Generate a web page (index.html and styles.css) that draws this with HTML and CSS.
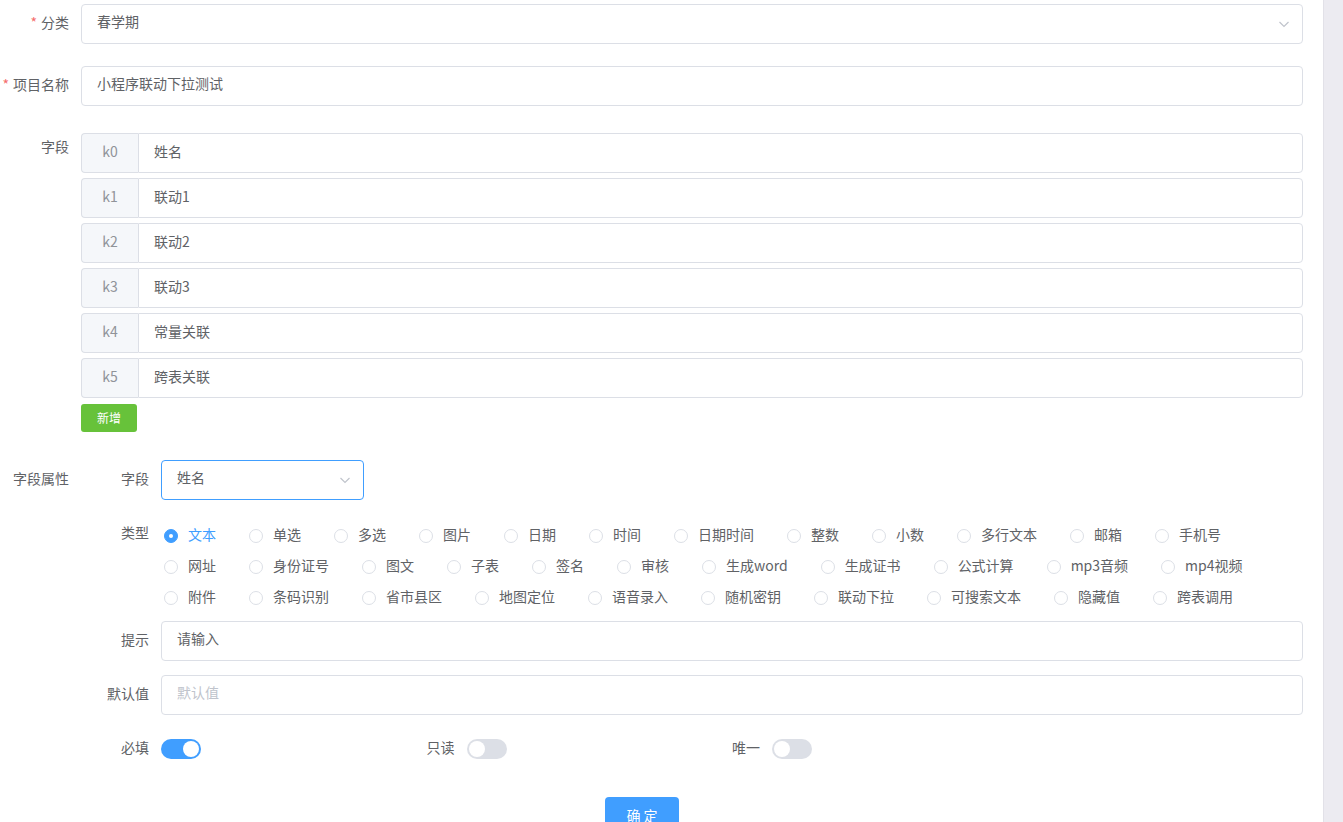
FILE: index.html
```html
<!DOCTYPE html>
<html lang="zh">
<head>
<meta charset="utf-8">
<title>表单</title>
<link rel="stylesheet" href="styles.css">
</head>
<body>
<div class="page">
  <div class="main">
    <div class="form-item">
      <label class="label"><span class="req">*</span>分类</label>
      <div class="content">
        <div class="input select"><span>春学期</span>
          <svg class="arrow" width="12" height="12" viewBox="0 0 12 12"><path d="M1.5 4 L6 8.5 L10.5 4" fill="none" stroke="#c0c4cc" stroke-width="1.2"/></svg>
        </div>
      </div>
    </div>
    <div class="form-item">
      <label class="label"><span class="req">*</span>项目名称</label>
      <div class="content">
        <div class="input"><span>小程序联动下拉测试</span></div>
      </div>
    </div>
    <div class="form-item fields">
      <label class="label">字段</label>
      <div class="content">
        <div class="group"><div class="prepend">k0</div><div class="ginput">姓名</div></div>
        <div class="group"><div class="prepend">k1</div><div class="ginput">联动1</div></div>
        <div class="group"><div class="prepend">k2</div><div class="ginput">联动2</div></div>
        <div class="group"><div class="prepend">k3</div><div class="ginput">联动3</div></div>
        <div class="group"><div class="prepend">k4</div><div class="ginput">常量关联</div></div>
        <div class="group"><div class="prepend">k5</div><div class="ginput">跨表关联</div></div>
        <button class="btn-add">新增</button>
      </div>
    </div>
    <div class="form-item attrs">
      <label class="label">字段属性</label>
      <div class="content">
        <div class="sub-item">
          <label class="sub-label">字段</label>
          <div class="sub-content">
            <div class="input select focus small"><span>姓名</span>
              <svg class="arrow" width="12" height="12" viewBox="0 0 12 12"><path d="M1.5 4 L6 8.5 L10.5 4" fill="none" stroke="#c0c4cc" stroke-width="1.2"/></svg>
            </div>
          </div>
        </div>
        <div class="sub-item types">
          <label class="sub-label">类型</label>
          <div class="sub-content radios">
            <span class="radio on"><i></i><b>文本</b></span>
            <span class="radio"><i></i><b>单选</b></span>
            <span class="radio"><i></i><b>多选</b></span>
            <span class="radio"><i></i><b>图片</b></span>
            <span class="radio"><i></i><b>日期</b></span>
            <span class="radio"><i></i><b>时间</b></span>
            <span class="radio"><i></i><b>日期时间</b></span>
            <span class="radio"><i></i><b>整数</b></span>
            <span class="radio"><i></i><b>小数</b></span>
            <span class="radio"><i></i><b>多行文本</b></span>
            <span class="radio"><i></i><b>邮箱</b></span>
            <span class="radio"><i></i><b>手机号</b></span>
            <span class="radio"><i></i><b>网址</b></span>
            <span class="radio"><i></i><b>身份证号</b></span>
            <span class="radio"><i></i><b>图文</b></span>
            <span class="radio"><i></i><b>子表</b></span>
            <span class="radio"><i></i><b>签名</b></span>
            <span class="radio"><i></i><b>审核</b></span>
            <span class="radio"><i></i><b>生成word</b></span>
            <span class="radio"><i></i><b>生成证书</b></span>
            <span class="radio"><i></i><b>公式计算</b></span>
            <span class="radio"><i></i><b>mp3音频</b></span>
            <span class="radio"><i></i><b>mp4视频</b></span>
            <span class="radio"><i></i><b>附件</b></span>
            <span class="radio"><i></i><b>条码识别</b></span>
            <span class="radio"><i></i><b>省市县区</b></span>
            <span class="radio"><i></i><b>地图定位</b></span>
            <span class="radio"><i></i><b>语音录入</b></span>
            <span class="radio"><i></i><b>随机密钥</b></span>
            <span class="radio"><i></i><b>联动下拉</b></span>
            <span class="radio"><i></i><b>可搜索文本</b></span>
            <span class="radio"><i></i><b>隐藏值</b></span>
            <span class="radio"><i></i><b>跨表调用</b></span>
          </div>
        </div>
        <div class="sub-item">
          <label class="sub-label">提示</label>
          <div class="sub-content"><div class="input"><span>请输入</span></div></div>
        </div>
        <div class="sub-item">
          <label class="sub-label">默认值</label>
          <div class="sub-content"><div class="input"><span class="ph">默认值</span></div></div>
        </div>
        <div class="switch-row">
          <div class="sub-item"><label class="sub-label">必填</label><div class="sub-content"><span class="switch on"></span></div></div>
          <div class="sub-item"><label class="sub-label">只读</label><div class="sub-content"><span class="switch"></span></div></div>
          <div class="sub-item"><label class="sub-label">唯一</label><div class="sub-content"><span class="switch"></span></div></div>
        </div>
      </div>
    </div>
    <div class="footer"><button class="btn-ok">确 定</button></div>
  </div>
  <div class="scrollbar"></div>
</div>
</body>
</html>
```
FILE: styles.css
```css
html, body {
  margin: 0;
  padding: 0;
  background: #fff;
}
body {
  font-family: "Noto Sans CJK SC", "Liberation Sans", sans-serif;
  font-size: 14px;
  color: #606266;
}
.page {
  display: flex;
  height: 822px;
  overflow: hidden;
}
.main {
  flex: 1;
  min-width: 0;
  padding: 4px 20px 0 0;
}
.scrollbar {
  width: 19px;
  flex: none;
  background: #ecebf1;
  border-left: 1px solid #e2e1e8;
}
.form-item {
  display: flex;
  margin-bottom: 22px;
}
.label {
  width: 81px;
  flex: none;
  box-sizing: border-box;
  padding: 0 12px 4px 0;
  text-align: right;
  line-height: 36px;
  color: #606266;
  white-space: nowrap;
}
.req {
  color: #f56c6c;
  margin-right: 4px;
}
.content {
  flex: 1;
  min-width: 0;
}
.input {
  position: relative;
  height: 40px;
  box-sizing: border-box;
  border: 1px solid #dcdfe6;
  border-radius: 4px;
  padding: 0 15px;
  line-height: 33px;
  color: #606266;
  background: #fff;
}
.input.focus {
  border-color: #409eff;
}
.input.small {
  width: 203px;
}
.ph {
  color: #c0c4cc;
}
.arrow {
  position: absolute;
  right: 12px;
  top: 13px;
}
.fields {
  margin-bottom: 28px;
}
.group {
  display: flex;
  height: 40px;
  margin-top: 5px;
}
.prepend {
  width: 57px;
  box-sizing: border-box;
  background: #f5f7fa;
  border: 1px solid #dcdfe6;
  border-right: 0;
  border-radius: 4px 0 0 4px;
  color: #909399;
  text-align: center;
  line-height: 34px;
}
.ginput {
  flex: 1;
  box-sizing: border-box;
  border: 1px solid #dcdfe6;
  border-radius: 0 4px 4px 0;
  padding: 0 15px;
  line-height: 34px;
  color: #606266;
}
.btn-add {
  display: block;
  margin-top: 6px;
  width: 56px;
  height: 28px;
  border: 0;
  border-radius: 3px;
  background: #67c23a;
  color: #fff;
  font-family: inherit;
  font-size: 12px;
  padding: 0 0 2px;
}
.attrs {
  margin-bottom: 28px;
}
.sub-item {
  display: flex;
  margin-bottom: 14px;
}
.sub-label {
  width: 80px;
  flex: none;
  box-sizing: border-box;
  padding: 0 12px 4px 0;
  text-align: right;
  line-height: 36px;
  white-space: nowrap;
}
.sub-content {
  flex: 1;
  min-width: 0;
}
.types {
  margin-bottom: 8px;
}
.radios {
  display: flex;
  flex-wrap: wrap;
  padding: 6px 0 0 3px;
}
.radio {
  display: inline-flex;
  align-items: center;
  height: 31px;
  margin-right: 33px;
  white-space: nowrap;
}
.radio i {
  width: 14px;
  height: 14px;
  box-sizing: border-box;
  border: 1px solid #dcdfe6;
  border-radius: 50%;
  background: #fff;
  position: relative;
}
.radio.on i {
  background: #409eff;
  border-color: #409eff;
}
.radio.on i::after {
  content: "";
  position: absolute;
  left: 4px;
  top: 4px;
  width: 4px;
  height: 4px;
  border-radius: 50%;
  background: #fff;
}
.radio b {
  display: block;
  font-weight: normal;
  padding: 0 0 3px 10px;
  line-height: 20px;
  color: #606266;
}
.radio.on b {
  color: #409eff;
}
.switch-row {
  display: grid;
  grid-template-columns: repeat(4, 1fr);
}
.switch-row .sub-item {
  margin-bottom: 0;
  align-items: center;
}
.switch {
  display: block;
  position: relative;
  width: 40px;
  height: 20px;
  border-radius: 10px;
  background: #dcdfe6;
}
.switch::after {
  content: "";
  position: absolute;
  top: 2px;
  left: 2px;
  width: 16px;
  height: 16px;
  border-radius: 50%;
  background: #fff;
}
.switch.on {
  background: #409eff;
}
.switch.on::after {
  left: 22px;
}
.footer {
  display: flex;
}
.btn-ok {
  margin-left: 605px;
  width: 74px;
  height: 40px;
  border: 0;
  border-radius: 4px;
  background: #409eff;
  color: #fff;
  font-family: inherit;
  font-size: 14px;
  padding: 0 0 4px;
}
```
